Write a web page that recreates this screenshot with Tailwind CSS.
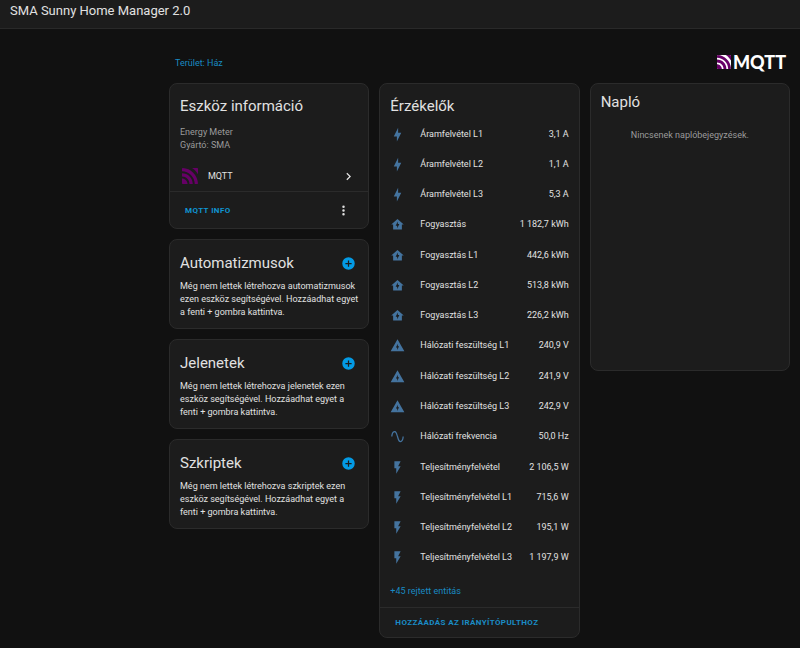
<!DOCTYPE html>
<html lang="hu">
<head>
    <meta charset="UTF-8">
    <meta name="viewport" content="width=device-width, initial-scale=1.0">
    <title>SMA Sunny Home Manager 2.0</title>
    <script src="https://cdn.jsdelivr.net/npm/@tailwindcss/browser@4"></script>
</head>
<body class="min-h-screen bg-[#111111] font-[Roboto,sans-serif] text-[9px] leading-[13px] text-[#e1e1e1]">

    <!-- Icon set -->
    <svg class="hidden">
        <symbol id="bolt" viewBox="0 0 24 24"><path d="M11 15H6L13 1V9H18L11 23V15Z"/></symbol>
        <symbol id="home" viewBox="0 0 24 24"><path fill-rule="evenodd" d="M12 3L2 12H5V20H19V12H22L12 3M11.5 18V14H9L12.5 7V11H15L11.5 18Z"/></symbol>
        <symbol id="triangle" viewBox="0 0 24 24"><path fill-rule="evenodd" d="M12 2L1 21H23L12 2M11.5 19V15H9.5L12.5 9V13H14.5L11.5 19Z"/></symbol>
        <symbol id="sine" viewBox="0 0 24 24"><path d="M16.5,21C13.5,21 12.31,16.76 11.05,12.28C10.14,9.04 9,5 7.5,5C4.11,5 4,11.93 4,12H2C2,11.63 2.06,3 7.5,3C10.5,3 11.71,7.25 12.97,11.74C13.83,14.8 15,19 16.5,19C19.94,19 20.03,12.07 20.03,12H22.03C22.03,12.37 21.97,21 16.5,21Z"/></symbol>
        <symbol id="flash" viewBox="0 0 24 24"><path d="M7,2V13H10V22L17,10H13L17,2H7Z"/></symbol>
        <symbol id="plus" viewBox="0 0 24 24"><path d="M17,13H13V17H11V13H7V11H11V7H13V11H17M12,2A10,10 0 0,0 2,12A10,10 0 0,0 12,22A10,10 0 0,0 22,12A10,10 0 0,0 12,2Z"/></symbol>
        <symbol id="chevron" viewBox="0 0 24 24"><path d="M8.59,16.58L13.17,12L8.59,7.41L10,6L16,12L10,18L8.59,16.58Z"/></symbol>
        <symbol id="dots" viewBox="0 0 24 24"><path d="M12,16A2,2 0 0,1 14,18A2,2 0 0,1 12,20A2,2 0 0,1 10,18A2,2 0 0,1 12,16M12,10A2,2 0 0,1 14,12A2,2 0 0,1 12,14A2,2 0 0,1 10,12A2,2 0 0,1 12,10M12,4A2,2 0 0,1 14,6A2,2 0 0,1 12,8A2,2 0 0,1 10,6A2,2 0 0,1 12,4Z"/></symbol>
        <!-- Bottom left disc, two arcs and the top right corner -->
        <symbol id="mqtt" viewBox="0 0 32 32">
            <path d="M0 21C6 21 11 26 11 32H1.500A1.500 1.500 0 0 1 0 30.500Z"/>
            <path d="M0 10.500V17C8.500 17 15 23.500 15 32H21.500C21.500 20 12 10.500 0 10.500Z"/>
            <path d="M0 1.500V6.500C14 6.500 25.500 18 25.500 32H30.500A1.500 1.500 0 0 0 32 30.500C31 14.500 17.500 0.500 1.500 0A1.500 1.500 0 0 0 0 1.500Z"/>
            <path d="M20 0H30.500A1.500 1.500 0 0 1 32 1.500V12.500C29 7.500 25 3 20 0Z"/>
        </symbol>
    </svg>

    <!-- Toolbar -->
    <header class="flex h-[29px] items-start border-b border-[#292929] bg-[#1c1c1c] px-[10px] pt-[3px]">
        <h1 class="text-[13px] leading-4">SMA Sunny Home Manager 2.0</h1>
    </header>

    <main class="pr-[10px] pb-[10px] pl-[169px]">
        <div class="flex h-[54px] items-end justify-between pb-[9px]">
            <a href="#" class="mb-[4px] ml-[6px] text-[#198bc2]">Terület: Ház</a>
            <div class="mr-[4px] flex items-center gap-[2px]">
                <svg class="size-[14px] bg-white" fill="#660066"><use href="#mqtt"/></svg>
                <span class="font-[Lato,sans-serif] text-[18px] leading-6 font-black text-white">MQTT</span>
            </div>
        </div>

        <div class="grid grid-cols-3 items-start gap-[10px]">

            <!-- Device info and related items -->
            <div class="flex flex-col gap-[10px]">
                <section class="rounded-lg border border-[#2b2b2b] bg-[#1c1c1c]">
                    <div class="px-[10px] pt-[12px]">
                        <h2 class="text-[15px] leading-5">Eszköz információ</h2>
                        <div class="mt-[10px] text-[#9b9b9b]">
                            <p>Energy Meter</p>
                            <p>Gyártó: SMA</p>
                        </div>
                    </div>
                    <a href="#" class="mt-[9px] flex h-[30px] items-center px-[12px]">
                        <svg class="size-[16px]" fill="#660066"><use href="#mqtt"/></svg>
                        <span class="ml-[10px]">MQTT</span>
                        <svg class="ml-auto size-[15px]" fill="#e1e1e1"><use href="#chevron"/></svg>
                    </a>
                    <div class="flex h-[37px] items-center justify-between border-t border-[#2b2b2b] pr-[17px] pl-[15px]">
                        <button type="button" class="text-[8px] font-bold tracking-wider text-[#0f94d2]">MQTT INFO</button>
                        <button type="button" aria-label="Menü"><svg class="size-[15px]" fill="#e1e1e1"><use href="#dots"/></svg></button>
                    </div>
                </section>

                <section class="rounded-lg border border-[#2b2b2b] bg-[#1c1c1c] px-[10px] pt-[13px] pb-[9px]">
                    <div class="flex items-center justify-between">
                        <h2 class="text-[15px] leading-5">Automatizmusok</h2>
                        <button type="button" aria-label="Új automatizmus" class="mr-[2px]"><svg class="size-[15px]" fill="#039be5"><use href="#plus"/></svg></button>
                    </div>
                    <p class="mt-[7px]">Még nem lettek létrehozva automatizmusok ezen eszköz segítségével. Hozzáadhat egyet a fenti + gombra kattintva.</p>
                </section>

                <section class="rounded-lg border border-[#2b2b2b] bg-[#1c1c1c] px-[10px] pt-[13px] pb-[9px]">
                    <div class="flex items-center justify-between">
                        <h2 class="text-[15px] leading-5">Jelenetek</h2>
                        <button type="button" aria-label="Új jelenet" class="mr-[2px]"><svg class="size-[15px]" fill="#039be5"><use href="#plus"/></svg></button>
                    </div>
                    <p class="mt-[7px]">Még nem lettek létrehozva jelenetek ezen eszköz segítségével. Hozzáadhat egyet a fenti + gombra kattintva.</p>
                </section>

                <section class="rounded-lg border border-[#2b2b2b] bg-[#1c1c1c] px-[10px] pt-[13px] pb-[9px]">
                    <div class="flex items-center justify-between">
                        <h2 class="text-[15px] leading-5">Szkriptek</h2>
                        <button type="button" aria-label="Új szkript" class="mr-[2px]"><svg class="size-[15px]" fill="#039be5"><use href="#plus"/></svg></button>
                    </div>
                    <p class="mt-[7px]">Még nem lettek létrehozva szkriptek ezen eszköz segítségével. Hozzáadhat egyet a fenti + gombra kattintva.</p>
                </section>
            </div>

            <!-- Sensors -->
            <section class="rounded-lg border border-[#2b2b2b] bg-[#1c1c1c]">
                <h2 class="px-[10px] pt-[12px] text-[15px] leading-5">Érzékelők</h2>
                <!-- Rows are filled in by the script below -->
                <ul id="sensors" class="mt-[3px] grid h-[454px] auto-rows-fr px-[10px]"></ul>
                <button type="button" class="mx-[10px] mt-[12px] mb-[9px] block text-[#198bc2]">+45 rejtett entitás</button>
                <div class="flex h-[30px] items-center border-t border-[#2b2b2b] px-[15px]">
                    <button type="button" class="text-[8px] font-bold tracking-wider text-[#1a8cc6]">HOZZÁADÁS AZ IRÁNYÍTÓPULTHOZ</button>
                </div>
            </section>

            <!-- Logbook -->
            <section class="min-h-[288px] rounded-lg border border-[#2b2b2b] bg-[#1c1c1c] px-[10px] pt-[8px]">
                <h2 class="text-[15px] leading-5">Napló</h2>
                <p class="mt-[17px] text-center text-[#9b9b9b]">Nincsenek naplóbejegyzések.</p>
            </section>
        </div>
    </main>

    <script>
        const sensors = [
            ['bolt', 'Áramfelvétel L1', '3,1 A'],
            ['bolt', 'Áramfelvétel L2', '1,1 A'],
            ['bolt', 'Áramfelvétel L3', '5,3 A'],
            ['home', 'Fogyasztás', '1 182,7 kWh'],
            ['home', 'Fogyasztás L1', '442,6 kWh'],
            ['home', 'Fogyasztás L2', '513,8 kWh'],
            ['home', 'Fogyasztás L3', '226,2 kWh'],
            ['triangle', 'Hálózati feszültség L1', '240,9 V'],
            ['triangle', 'Hálózati feszültség L2', '241,9 V'],
            ['triangle', 'Hálózati feszültség L3', '242,9 V'],
            ['sine', 'Hálózati frekvencia', '50,0 Hz'],
            ['flash', 'Teljesítményfelvétel', '2 106,5 W'],
            ['flash', 'Teljesítményfelvétel L1', '715,6 W'],
            ['flash', 'Teljesítményfelvétel L2', '195,1 W'],
            ['flash', 'Teljesítményfelvétel L3', '1 197,9 W']
        ];

        document.getElementById('sensors').innerHTML = sensors.map(([icon, name, state]) => `
            <li class="flex items-center">
                <svg class="size-[15px] shrink-0" fill="#44739e"><use href="#${icon}"/></svg>
                <span class="ml-[15px] whitespace-nowrap">${name}</span>
                <span class="ml-auto whitespace-nowrap">${state}</span>
            </li>`).join('');
    </script>

</body>
</html>
